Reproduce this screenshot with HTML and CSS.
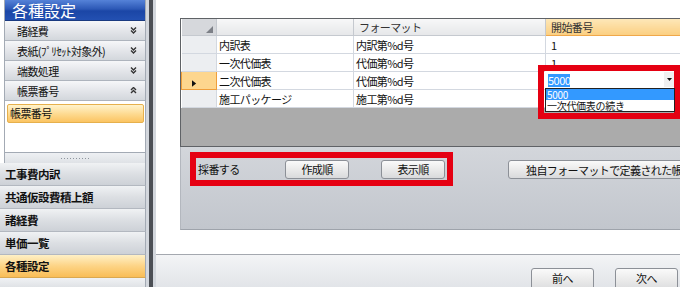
FILE: index.html
```html
<!DOCTYPE html>
<html>
<head>
  <meta charset="utf-8">
  <title>各種設定</title>
  <link rel="stylesheet" href="styles.css">
</head>
<body>
  <div class="app">
    <aside class="sidebar">
      <div class="acc">
        <div class="acc-title">各種設定</div>
        <div class="acc-item">諸経費<svg class="chev" viewBox="0 0 7 7"><polyline points="1,0.5 3.5,3 6,0.5"/><polyline points="1,3.5 3.5,6 6,3.5"/></svg></div>
        <div class="acc-item">表紙(ﾌﾟﾘｾｯﾄ対象外)<svg class="chev" viewBox="0 0 7 7"><polyline points="1,0.5 3.5,3 6,0.5"/><polyline points="1,3.5 3.5,6 6,3.5"/></svg></div>
        <div class="acc-item">端数処理<svg class="chev" viewBox="0 0 7 7"><polyline points="1,0.5 3.5,3 6,0.5"/><polyline points="1,3.5 3.5,6 6,3.5"/></svg></div>
        <div class="acc-item">帳票番号<svg class="chev" viewBox="0 0 7 7"><polyline points="1,3 3.5,0.5 6,3"/><polyline points="1,6 3.5,3.5 6,6"/></svg></div>
        <div class="acc-body">
          <div class="acc-sel">帳票番号</div>
        </div>
      </div>
      <div class="grip"><span></span></div>
      <div class="nav-item">工事費内訳</div>
      <div class="nav-item">共通仮設費積上額</div>
      <div class="nav-item">諸経費</div>
      <div class="nav-item">単価一覧</div>
      <div class="nav-item active">各種設定</div>
      <div class="nav-item"></div>
    </aside>

    <div class="splitter"></div>

    <main class="main">
      <div class="content">
        <div class="grid-wrap">
          <table class="grid">
            <colgroup>
              <col class="c-head"><col class="c-name"><col class="c-format"><col class="c-start">
            </colgroup>
            <tr class="hdr">
              <th class="corner"><svg viewBox="0 0 8 8"><polygon points="8,0 8,8 0,8"/></svg></th>
              <th></th>
              <th>フォーマット</th>
              <th class="sorted">開始番号</th>
            </tr>
            <tr>
              <td class="rh"></td><td>内訳表</td><td>内訳第%d号</td><td class="num">1</td>
            </tr>
            <tr>
              <td class="rh"></td><td>一次代価表</td><td>代価第%d号</td><td class="num">1</td>
            </tr>
            <tr>
              <td class="rh current"><svg viewBox="0 0 6 8"><polygon points="0,0 5,4 0,8"/></svg></td><td>二次代価表</td><td>代価第%d号</td><td class="num"></td>
            </tr>
            <tr>
              <td class="rh"></td><td>施工パッケージ</td><td>施工第%d号</td><td class="num"></td>
            </tr>
          </table>

          <div class="editor">
            <div class="combo">
              <span class="combo-text"><span class="sel">5000</span></span>
              <span class="combo-btn"><svg viewBox="0 0 5 3"><polygon points="0,0 5,0 2.5,3"/></svg></span>
            </div>
            <ul class="droplist">
              <li class="hl">5000</li>
              <li>一次代価表の続き</li>
            </ul>
          </div>
        </div>

        <div class="panel">
          <div class="numbering">
            <span class="label">採番する</span>
            <button class="btn">作成順</button>
            <button class="btn">表示順</button>
          </div>
          <button class="btn wide">独自フォーマットで定義された帳票番号</button>
        </div>
      </div>

      <div class="footer">
        <button class="btn nav-btn">前へ</button>
        <button class="btn nav-btn">次へ</button>
      </div>
    </main>
  </div>
</body>
</html>
```

FILE: styles.css
```css
body {
  margin: 0;
  padding: 0;
  font-family: "Noto Sans CJK JP", "Noto Sans", sans-serif;
  font-size: 11px;
  color: #111;
  background: #fff;
  overflow: hidden;
}

.app {
  display: flex;
  width: 680px;
  height: 287px;
  overflow: hidden;
}

/* sidebar */

.sidebar {
  width: 146px;
  flex: none;
  display: flex;
  flex-direction: column;
}

.sidebar > * {
  flex: none;
}

.acc {
  margin-left: 4px;
  border-left: 1px solid #a3aab4;
  border-right: 1px solid #a3aab4;
  display: flex;
  flex-direction: column;
}

.acc > * {
  flex: none;
}

.acc-title {
  height: 21px;
  box-sizing: border-box;
  padding-left: 7px;
  font-size: 16px;
  line-height: 20px;
  color: #fff;
  letter-spacing: 0;
  background: linear-gradient(#5582d8, #2c58b6 45%, #1b46a6 55%, #2350b2);
  border-bottom: 1px solid #1a3a80;
}

.acc-item {
  height: 20px;
  box-sizing: border-box;
  display: flex;
  align-items: center;
  justify-content: space-between;
  padding: 0 8px 0 12px;
  letter-spacing: -0.6px;
  background: linear-gradient(#f6f7f9, #e4e6ea 50%, #d3d7dc);
  border-bottom: 1px solid #aeb4bd;
}

.chev {
  width: 7px;
  height: 7px;
}

.chev polyline {
  fill: none;
  stroke: #333;
  stroke-width: 1.4;
}

.acc-body {
  height: 52px;
  background: #fff;
  padding: 3px 1px 0 2px;
  border-bottom: 1px solid #a3aab4;
  box-sizing: border-box;
}

.acc-sel {
  height: 19px;
  box-sizing: border-box;
  padding-left: 2px;
  line-height: 17px;
  letter-spacing: -0.6px;
  border: 1px solid #e6b04c;
  border-radius: 2px;
  background: linear-gradient(#fff3cc, #fdd98e 55%, #fbc462);
}

.grip {
  height: 10px;
  display: flex;
  justify-content: center;
  align-items: center;
  background: linear-gradient(#eef0f3, #dfe2e6);
  margin-left: 4px;
  border-left: 1px solid #a3aab4;
  border-right: 1px solid #a3aab4;
}

.grip span {
  width: 28px;
  height: 1px;
  background: repeating-linear-gradient(90deg, #8e959e 0 1px, transparent 1px 3px);
}

.nav-item {
  height: 23px;
  box-sizing: border-box;
  padding-left: 5px;
  line-height: 22px;
  font-weight: bold;
  font-size: 11.5px;
  letter-spacing: -0.5px;
  background: linear-gradient(#f0f2f4, #dcdfe3 50%, #cdd1d7);
  border-bottom: 1px solid #b3b8c0;
  border-right: 1px solid #a3aab4;
}

.nav-item.active {
  background: linear-gradient(#fff0c6, #fdd486 50%, #f9bd56);
  border-bottom-color: #d9a850;
}

.splitter {
  width: 4px;
  flex: none;
  background: #4c4f55;
  border-left: 3px solid #d3d7dd;
  border-right: 3px solid #d3d7dd;
}

/* main */

.main {
  flex: 1;
  display: flex;
  flex-direction: column;
  overflow: hidden;
}

.content {
  height: 254px;
  flex: none;
  padding: 18px 0 0 24px;
  box-sizing: border-box;
}

.grid-wrap {
  position: relative;
  width: 540px;
  height: 129px;
  box-sizing: border-box;
  background: #ababab;
  border: 1px solid #5f6266;
  border-right: none;
}

.grid {
  border-collapse: collapse;
  table-layout: fixed;
  width: 520px;
  background: #fff;
}

.c-head { width: 35px; }
.c-name { width: 137px; }
.c-format { width: 192px; }
.c-start { width: 156px; }

.grid th,
.grid td {
  padding: 0 2px;
  height: 18px;
  box-sizing: border-box;
  border: 1px solid #d3d8e0;
  text-align: left;
  font-weight: normal;
  white-space: nowrap;
  overflow: hidden;
  letter-spacing: -0.6px;
  line-height: 16px;
}

.grid tr:first-child th { border-top: none; }
.grid td:first-child, .grid th:first-child { border-left: none; }

.grid th {
  height: 16px;
  padding-left: 5px;
  color: #333;
  background: linear-gradient(#f7f7f8, #e6e7e9);
  border-color: #c5c9cf;
}

.grid th.corner {
  background: #d6d8dc;
  text-align: right;
  padding-right: 3px;
}

.corner svg {
  width: 7px;
  height: 7px;
  fill: #7d8087;
  vertical-align: -1px;
}

.grid th.sorted {
  background: linear-gradient(#fde7b8, #fbcf82);
  border-bottom: 1px solid #f0a84a;
}

.grid td.num {
  padding-left: 5px;
}

.grid td.rh {
  background: #eceef1;
  border-color: #d3d8e0;
}

.grid td.rh.current {
  background: #fdd68e;
  border: 1px solid #ef9f3c;
  padding-left: 10px;
}

.rh.current svg {
  width: 5px;
  height: 7px;
  fill: #111;
  vertical-align: -1px;
}

/* dropdown editor, shown over the current cell */

.editor {
  position: absolute;
  left: 357px;
  top: 46px;
  width: 142px;
  height: 54px;
  box-sizing: border-box;
  border: 6px solid #e50012;
  padding-left: 1px;
  display: flex;
  flex-direction: column;
}

.combo {
  height: 17px;
  flex: none;
  display: flex;
  align-items: center;
  background: #fff;
}

.combo-text {
  flex: 1;
  padding-left: 3px;
  line-height: 14px;
}

.sel {
  display: inline-block;
  background: #3399ff;
  color: #fff;
  letter-spacing: -0.5px;
  line-height: 13px;
}

.combo-btn {
  width: 10px;
  height: 15px;
  display: flex;
  align-items: center;
  justify-content: center;
  background: #f0f0f0;
}

.combo-btn svg {
  width: 5px;
  height: 3px;
  fill: #111;
}

.droplist {
  list-style: none;
  margin: 0;
  padding: 0;
  width: 130px;
  height: 24px;
  flex: none;
  box-sizing: border-box;
  border: 1px solid #222;
  background: #fff;
  font-size: 10px;
  line-height: 11px;
  overflow: hidden;
}

.droplist li {
  height: 11px;
  padding-left: 1px;
  letter-spacing: -0.3px;
  white-space: nowrap;
}

.droplist li.hl {
  background: #3399ff;
  color: #fff;
}

.panel {
  width: 540px;
  height: 83px;
  box-sizing: border-box;
  padding: 5px 0 0 9px;
  display: flex;
  align-items: flex-start;
  background: linear-gradient(#d3d6db, #c2c6cd);
  border-left: 1px solid #b3b7be;
  border-bottom: 1px solid #9ea3ab;
}

.numbering {
  width: 263px;
  height: 34px;
  flex: none;
  box-sizing: border-box;
  border: 6px solid #e50012;
  padding: 0 2px;
  display: flex;
  align-items: center;
}

.numbering .label {
  width: 87px;
  letter-spacing: -0.6px;
}

.btn {
  font-family: inherit;
  font-size: 11px;
  letter-spacing: -0.6px;
  color: #111;
  height: 19px;
  padding: 0;
  border: 1px solid #8c9097;
  border-radius: 3px;
  background: linear-gradient(#fafafa, #eaeaea 50%, #d9dadc);
  box-sizing: border-box;
}

.numbering .btn {
  width: 64px;
}

.numbering .btn + .btn {
  margin-left: 32px;
}

.btn.wide {
  margin: 8px 0 0 55px;
  width: 200px;
  flex: none;
  text-align: left;
  padding-left: 17px;
  white-space: nowrap;
  overflow: hidden;
}

/* footer */

.footer {
  flex: 1;
  display: flex;
  justify-content: flex-end;
  align-items: flex-start;
  gap: 21px;
  padding: 13px 2px 0 0;
  border-top: 1px solid #a4a8af;
  background: linear-gradient(#f3f4f6, #dfe2e6);
}

.nav-btn {
  width: 63px;
  height: 24px;
  flex: none;
  padding-bottom: 4px;
}
```
